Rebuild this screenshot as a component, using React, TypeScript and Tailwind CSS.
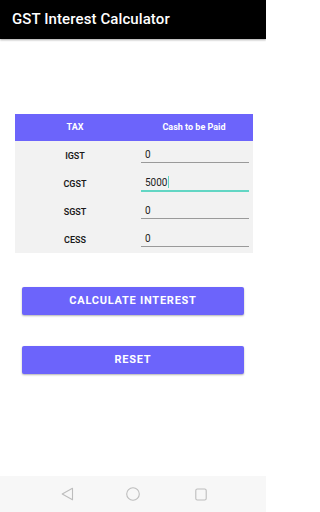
import React from 'react';

const rows = [
  { tax: 'IGST', value: '0' },
  { tax: 'CGST', value: '5000', focused: true },
  { tax: 'SGST', value: '0' },
  { tax: 'CESS', value: '0' },
];

export default function App() {
  return (
    <div
      className="w-[266px] h-[512px] flex flex-col bg-white overflow-hidden"
      style={{ fontFamily: 'Roboto, "Noto Sans", sans-serif' }}
    >
      {/* Action bar */}
      <div className="h-[39px] shrink-0 bg-black flex items-center px-3 shadow-[0_1px_2px_rgba(0,0,0,0.35)]">
        <span className="text-white text-[15px] font-medium tracking-[0.1px]">GST Interest Calculator</span>
      </div>

      <div className="flex-1 flex flex-col">
        {/* Tax table */}
        <div className="mt-[75px] mx-[15px] w-[238px]">
          <div className="h-[27px] bg-[#6c64fb] flex items-center text-white text-[9px] font-bold">
            <div className="w-[120px] text-center">TAX</div>
            <div className="flex-1 text-center">Cash to be Paid</div>
          </div>
          <div className="bg-[#f2f2f2]">
            {rows.map((r) => (
              <div key={r.tax} className="h-[28px] flex">
                <div className="w-[120px] flex items-center justify-center pt-[3px] text-[9px] font-semibold text-[#1a1a1a]">
                  {r.tax}
                </div>
                <div className="flex-1 pl-[6px] pr-[4px] flex flex-col justify-end pb-[5px]">
                  <div className="flex items-center pl-[4px] h-[16px] text-[10px] text-[#222]">
                    {r.value}
                    {r.focused && <span className="ml-[1px] w-[1px] h-[12px] bg-[#62d6c4]" />}
                  </div>
                  <div className={r.focused ? 'h-[2px] bg-[#62d6c4]' : 'h-[1px] bg-[#9a9a9a] mb-[1px]'} />
                </div>
              </div>
            ))}
          </div>
        </div>

        {/* Buttons */}
        <div className="mt-[34px] mx-[22px] flex flex-col gap-[31px]">
          <button className="h-[28px] rounded-[2px] bg-[#6c64fb] text-white text-[11px] font-bold tracking-[0.75px] shadow-[0_1px_2px_rgba(0,0,0,0.3)]">
            CALCULATE INTEREST
          </button>
          <button className="h-[28px] rounded-[2px] bg-[#6c64fb] text-white text-[11px] font-bold tracking-[0.75px] shadow-[0_1px_2px_rgba(0,0,0,0.3)]">
            RESET
          </button>
        </div>
      </div>

      {/* Navigation bar */}
      <div className="h-[36px] shrink-0 bg-[#f7f7f7] grid grid-cols-[61px_14px_51px_14px_55px_12px_59px] items-center">
        <div />
        <svg width="13" height="14" viewBox="0 0 13 14" fill="none" stroke="#bdbdbd" strokeWidth="1.1" strokeLinejoin="round">
          <path d="M11.5 1.2 L1.2 7 L11.5 12.8 Z" />
        </svg>
        <div />
        <svg width="14" height="14" viewBox="0 0 14 14" fill="none" stroke="#bdbdbd" strokeWidth="1.1">
          <circle cx="7" cy="7" r="6.3" />
        </svg>
        <div />
        <svg width="12" height="13" viewBox="0 0 12 13" fill="none" stroke="#bdbdbd" strokeWidth="1.1">
          <rect x="0.8" y="1" width="10.4" height="11" rx="1.5" />
        </svg>
        <div />
      </div>
    </div>
  );
}
